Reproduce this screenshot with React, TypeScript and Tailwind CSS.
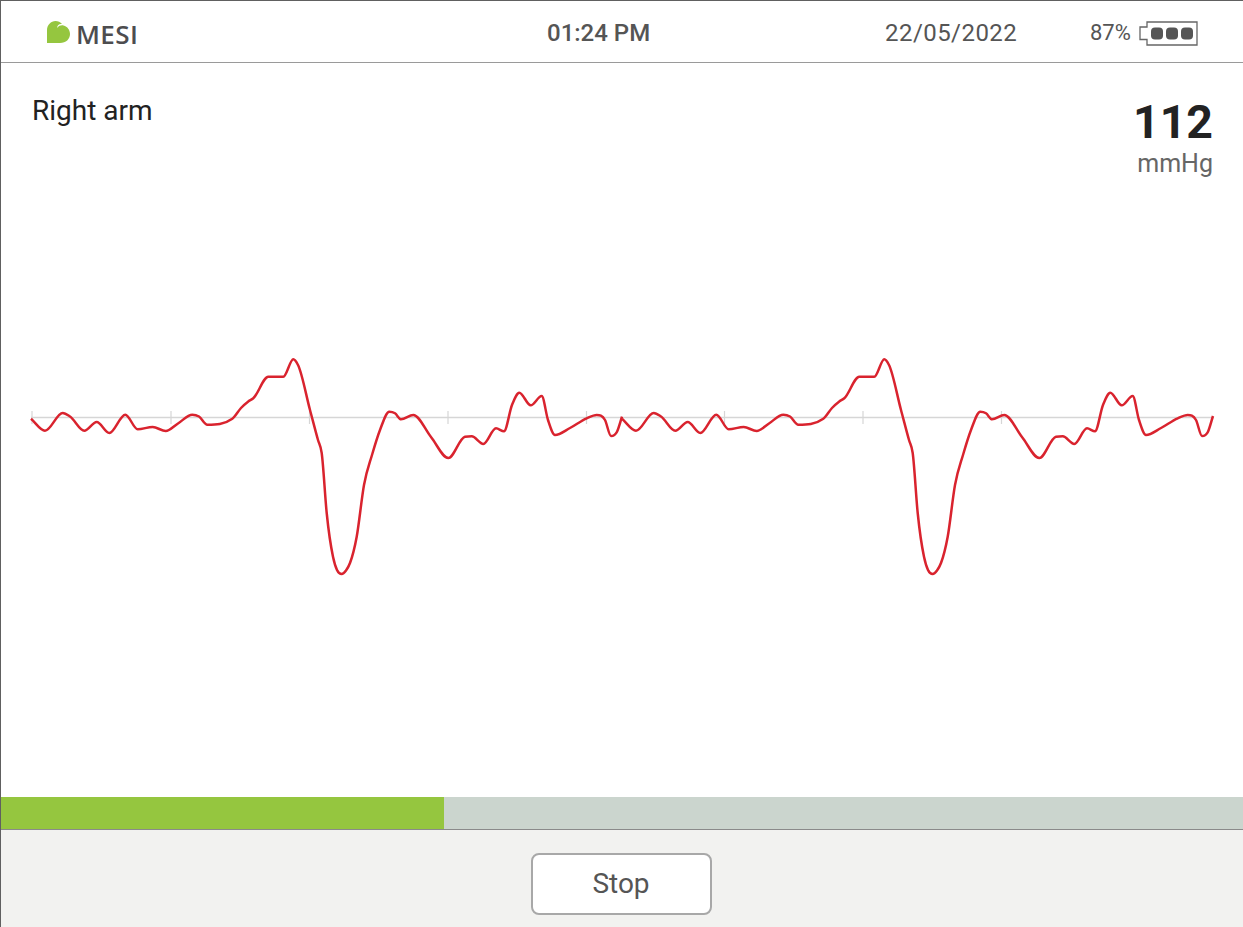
const base: [number, number][] = [
  [31, 418.7], [45, 430.7], [62.7, 413], [70, 416.5], [84.3, 430.7], [96.7, 422], [109.3, 433],
  [125.3, 414.7], [137.7, 429.3], [152.7, 427], [165.7, 431], [178, 423.5], [192.3, 414.7], [199, 416.5], [207.3, 424.7],
  [232.3, 418.7], [241, 408], [248, 401.7], [253.3, 398.3], [268.3, 376.7], [283.3, 376.7], [293.3, 359.3], [298, 365],
  [310, 410], [318, 440], [321.7, 453], [326.7, 513], [333, 556.7], [337, 570], [341.7, 574], [346, 570.5], [350, 563], [356.7, 536.7], [364, 485], [372, 455], [380, 430],
  [389.3, 411.7], [395, 413.3], [401, 419.3], [413.3, 415], [431, 437], [448.3, 458], [465, 436.7], [471.7, 436.3], [483.3, 444], [496, 428.3],
  [504, 431.3], [512, 405], [519.3, 392.7], [530.7, 405.3], [541.7, 396], [548, 420], [555, 435], [570, 428], [586.7, 418.3], [596.7, 415], [605, 420], [611, 436], [617, 431.7],
];

function smooth(p: [number, number][]) {
  const n = p.length;
  const delta: number[] = [];
  for (let i = 0; i < n - 1; i++) delta.push((p[i + 1][1] - p[i][1]) / (p[i + 1][0] - p[i][0]));
  const m: number[] = [delta[0]];
  for (let i = 1; i < n - 1; i++) {
    if (delta[i - 1] * delta[i] <= 0) {
      m.push(0);
    } else {
      const h0 = p[i][0] - p[i - 1][0];
      const h1 = p[i + 1][0] - p[i][0];
      const avg = (delta[i - 1] * h1 + delta[i] * h0) / (h0 + h1);
      const limit = 3 * Math.min(Math.abs(delta[i - 1]), Math.abs(delta[i]));
      m.push(Math.sign(avg) * Math.min(Math.abs(avg), limit));
    }
  }
  m.push(delta[n - 2]);
  let d = `M${p[0][0]} ${p[0][1]}`;
  for (let i = 0; i < n - 1; i++) {
    const h = (p[i + 1][0] - p[i][0]) / 3;
    d += ` C${(p[i][0] + h).toFixed(2)} ${(p[i][1] + m[i] * h).toFixed(2)} ${(p[i + 1][0] - h).toFixed(2)} ${(p[i + 1][1] - m[i + 1] * h).toFixed(2)} ${p[i + 1][0]} ${p[i + 1][1]}`;
  }
  return d;
}

const first = smooth([...base, [622, 416.7]]);
const second = smooth([...base.map(([x, y]) => [x + 591, y] as [number, number]), [1213, 416]]);
const ticks = [32, 171, 309.5, 448, 586.5, 724.5, 863, 1001.5];

function Logo() {
  return (
    <div className="flex items-center w-[500px] pl-[45px]">
      <svg width="24" height="24" viewBox="46 22 24 24">
        <path
          d="M47 44V31C47 26 51 22 55.5 22C58 22 60.5 23 62 25C59.5 24.5 57.5 25.5 57 29C59 26.5 61.5 26 63.5 26.5C67.5 27.5 70 31 70 35C70 40 66 44 60 44Z"
          fill="#95c63f"
        />
      </svg>
      <span className="ml-[6px] mt-[2px] font-['Open_Sans',sans-serif] font-semibold text-[26px] leading-none text-[#4d4d4f] tracking-[0.4px]">MESI</span>
    </div>
  );
}

function Battery() {
  return (
    <svg width="60" height="26" viewBox="1139 20 60 26" className="ml-[8px]">
      <path d="M1147 22H1197V45H1147V39.5H1140V27H1147Z" fill="none" stroke="#666" strokeWidth="1.3" />
      <rect x="1151" y="27.5" width="12" height="12" rx="4" fill="#555" />
      <rect x="1166" y="27.5" width="12" height="12" rx="4" fill="#555" />
      <rect x="1181" y="27.5" width="12" height="12" rx="4" fill="#555" />
    </svg>
  );
}

export default function App() {
  return (
    <div className="w-[1243px] h-[927px] flex flex-col bg-white border-l border-t border-[#606060] font-['Roboto',sans-serif] overflow-hidden">
      <header className="h-[62px] shrink-0 flex items-center pt-[2px] border-b border-[#9a9a9a] text-[#555]">
        <Logo />
        <span className="ml-[46px] text-[24px] font-medium w-[338px]">01:24 PM</span>
        <span className="text-[24px] tracking-[0.45px] w-[205px]">22/05/2022</span>
        <span className="text-[22px]">87%</span>
        <Battery />
      </header>
      <main className="flex-1 min-h-0 flex flex-col">
        <div className="h-[277px] shrink-0 flex justify-between pl-[31px] pr-[30px]">
          <span className="mt-[31px] text-[28px] leading-[34px] text-[#222]">Right arm</span>
          <div className="flex flex-col items-end mt-[32px]">
            <span className="text-[46.5px] leading-[54px] font-bold text-[#222]">112</span>
            <span className="text-[25px] leading-[29px] text-[#666]">mmHg</span>
          </div>
        </div>
        <svg width="1242" height="250" viewBox="1 340 1242 250" className="block shrink-0">
          <line x1="31" y1="417.5" x2="1213" y2="417.5" stroke="#d6d6d6" strokeWidth="1.5" />
          {ticks.map((x) => (
            <line key={x} x1={x} y1="411" x2={x} y2="424" stroke="#d6d6d6" strokeWidth="1.2" />
          ))}
          <path d={first} fill="none" stroke="#d9232e" strokeWidth="2.5" strokeLinejoin="round" />
          <path d={second} fill="none" stroke="#d9232e" strokeWidth="2.5" strokeLinejoin="round" />
        </svg>
        <div className="flex-1" />
      </main>
      <div className="h-[32px] shrink-0 bg-[#cbd5ce] flex">
        <div className="w-[443px] bg-[#95c63f]" />
      </div>
      <footer className="h-[98px] shrink-0 bg-[#f2f2f0] border-t border-[#8a8a8a] flex justify-center pt-[23px] pr-[2px]">
        <button className="w-[181px] h-[62px] bg-white border-2 border-[#a8a8a8] rounded-[8px] text-[28px] text-[#555]">Stop</button>
      </footer>
    </div>
  );
}
